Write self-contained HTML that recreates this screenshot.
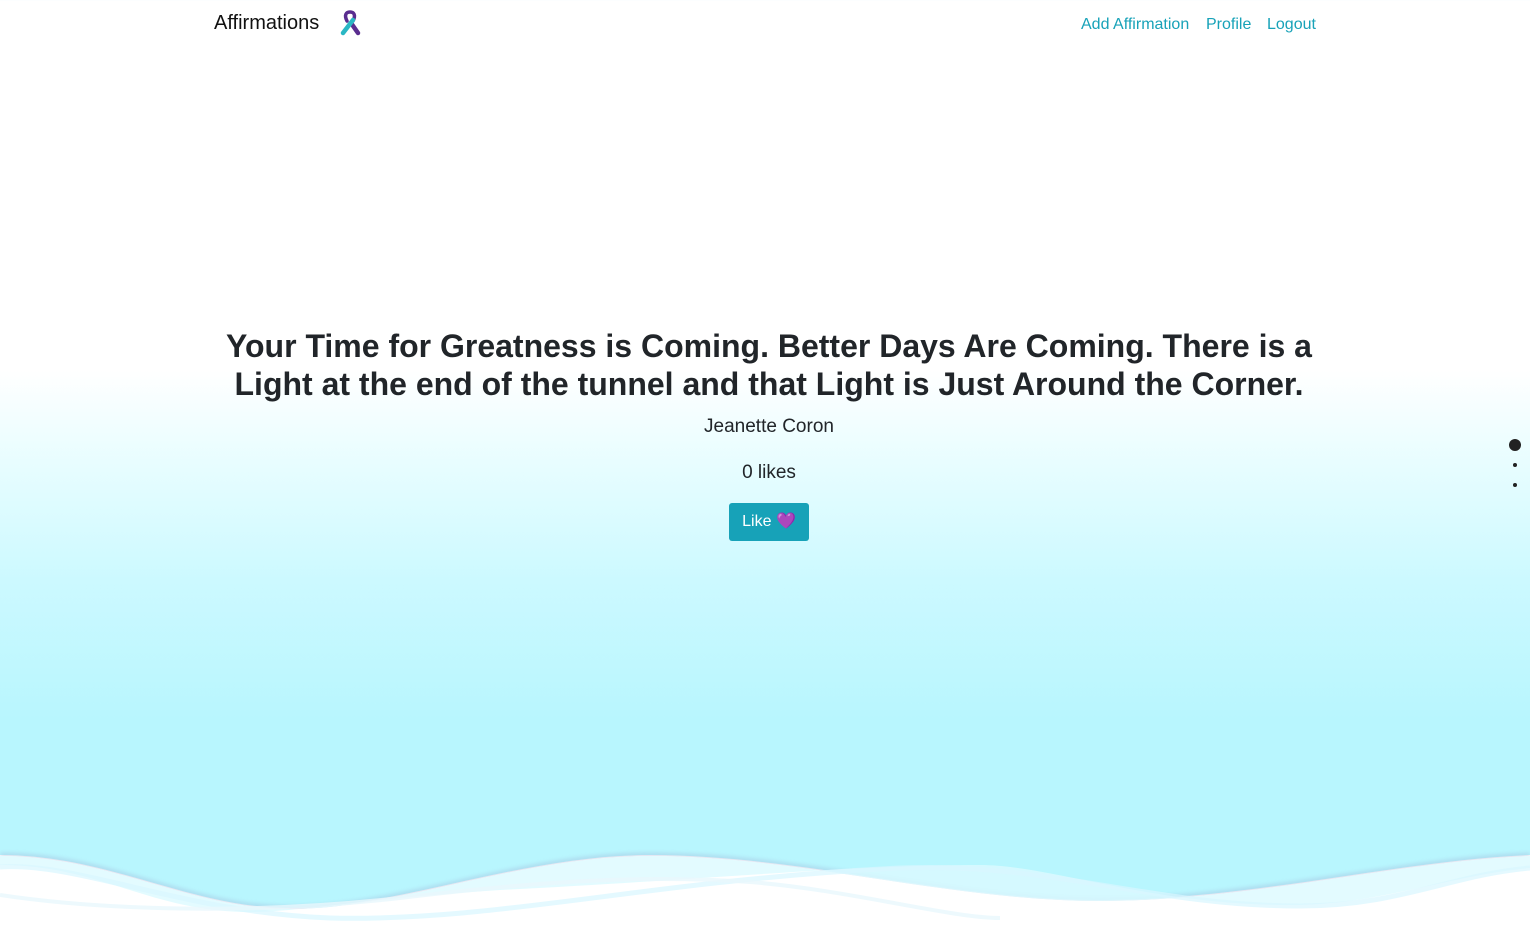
<!DOCTYPE html>
<html><head><meta charset="utf-8"><style>
html,body{margin:0;padding:0;width:1530px;height:931px;overflow:hidden;font-family:"Liberation Sans",Arial,sans-serif;color:#212529}
body{background:linear-gradient(to bottom,#fff 0px,#fff 370px,#e6fdff 470px,#ccf9ff 580px,#b8f6fe 720px,#b8f6fe 931px);position:relative}
.brand{position:absolute;left:214px;top:12px;font-size:20px;color:#111}
.nav{position:absolute;top:16px;font-size:16px;color:#17a2b8}
h1{position:absolute;left:200px;width:1138px;top:327px;margin:0;text-align:center;font-size:32px;line-height:38px;font-weight:bold}
.t{position:absolute;left:0;width:1538px;text-align:center;font-size:19px}
.btn{position:absolute;left:729px;top:503px;width:80px;height:38px;background:#17a2b8;border-radius:3px;color:#fff;font-size:16px;line-height:38px;text-align:center}
.dot{position:absolute;background:#222;border-radius:50%}
</style></head><body>
<div class="brand">Affirmations</div>
<svg style="position:absolute;left:337px;top:9px" width="26" height="28" viewBox="0 0 26 28">
<path d="M10 12 C7 6 9 3 13 3 C17 3 19 6 16 12" stroke="#5a2d8f" stroke-width="3.5" fill="none" stroke-linecap="round"/>
<path d="M14 14 L21 24" stroke="#5a2d8f" stroke-width="4.5" stroke-linecap="round"/>
<path d="M16 11 L6 24" stroke="#2ab7c4" stroke-width="4.5" stroke-linecap="round"/>
</svg>
<div class="nav" style="left:1081px">Add Affirmation</div>
<div class="nav" style="left:1206px">Profile</div>
<div class="nav" style="left:1267px">Logout</div>
<h1>Your Time for Greatness is Coming. Better Days Are Coming. There is a Light at the end of the tunnel and that Light is Just Around the Corner.</h1>
<div class="t" style="top:416px">Jeanette Coron</div>
<div class="t" style="top:462px">0 likes</div>
<div class="btn">Like <span style="color:#a040f0">💜</span></div>
<div class="dot" style="left:1509px;top:439px;width:12px;height:12px"></div>
<div class="dot" style="left:1513px;top:463px;width:4px;height:4px"></div>
<div class="dot" style="left:1513px;top:483px;width:4px;height:4px"></div>
<svg style="position:absolute;left:0;top:820px" width="1530" height="111" viewBox="0 0 1530 111">
<defs><filter id="b" x="-5%" y="-50%" width="110%" height="200%"><feGaussianBlur stdDeviation="2.5"/></filter></defs>
<path d="M0 35 C110 35 190 88 290 88 C400 88 520 35 650 35 C800 35 950 80 1100 80 C1250 80 1400 40 1530 35 L1530 111 L0 111Z" fill="#fff"/>
<path d="M0 35 C110 35 190 88 290 88 C400 88 520 35 650 35 C800 35 950 80 1100 80 C1250 80 1400 40 1530 35" fill="none" stroke="#9aa8d0" stroke-width="3" opacity="0.55" filter="url(#b)"/>
<path d="M0 36 C110 36 190 89 290 89 C400 89 520 36 650 36 C800 36 950 81 1100 81 C1250 81 1400 41 1530 36 L1530 111 L0 111Z" fill="#fff"/>
<path d="M0 36 C110 36 190 89 290 89 C400 89 520 36 650 36 C800 36 950 81 1100 81 C1250 81 1400 41 1530 36 L1530 48 C1450 55 1380 85 1290 85 C1150 85 1050 45 980 45 C850 45 700 60 500 70 C350 80 300 92 250 92 C150 92 100 45 0 45Z" fill="#dcfaff" opacity="0.8"/>
<path d="M0 47 C80 42 180 92 330 98 C500 102 650 60 900 48 C1050 42 1150 86 1300 86 C1400 86 1450 55 1530 48" fill="none" stroke="#d8f6ff" stroke-width="5" opacity="0.7"/>
<path d="M0 75 C100 90 250 95 400 78 C550 60 650 55 750 62 C850 70 950 98 1000 98" fill="none" stroke="#e8f8fc" stroke-width="4" opacity="0.8"/>
</svg>
</body></html>
